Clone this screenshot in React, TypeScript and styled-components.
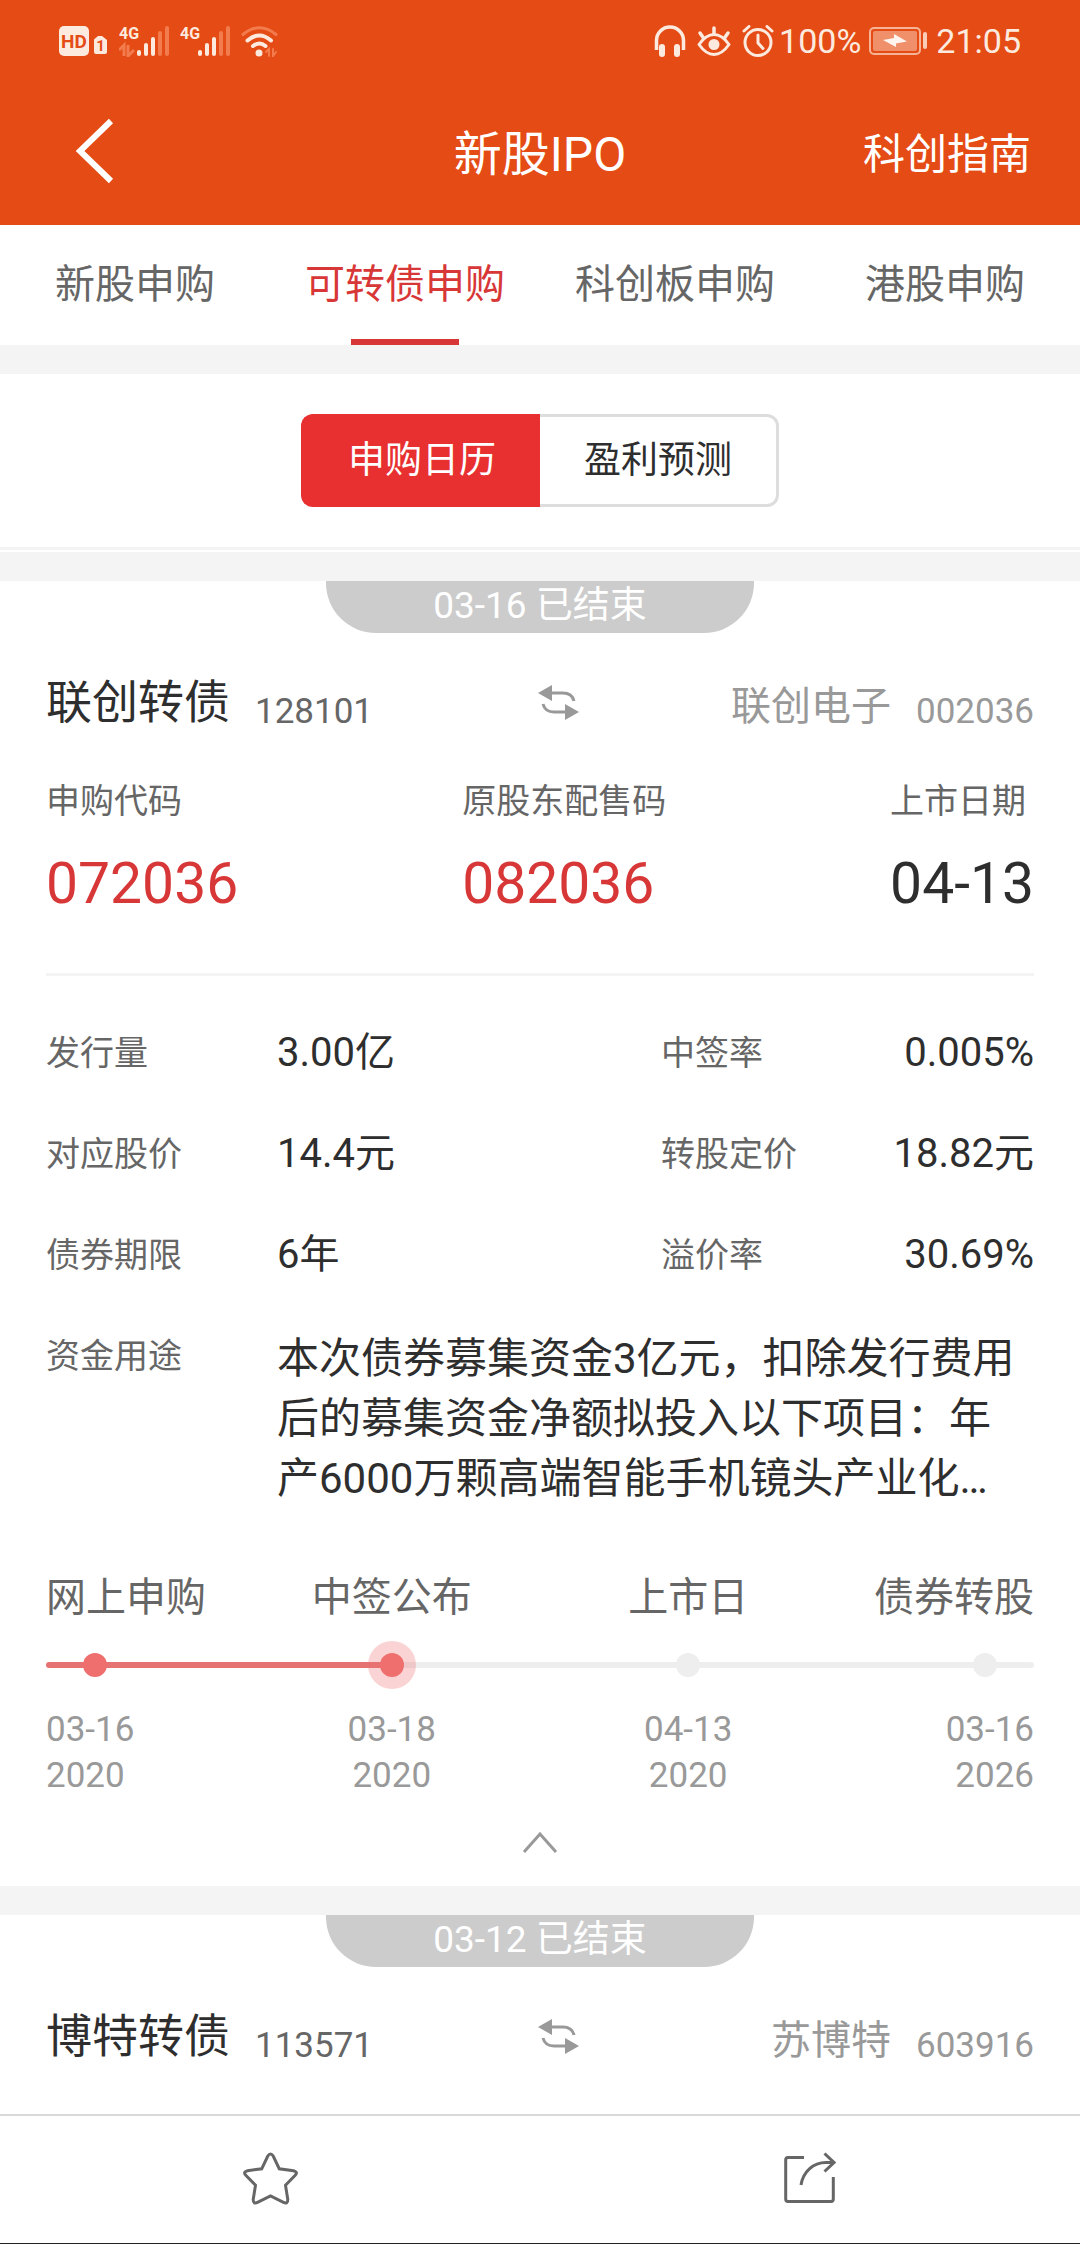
import React, { useState } from "react";
import styled, { createGlobalStyle, css } from "styled-components";

const color = {
  brand: "#e54b15",
  red: "#d83737",
  fill: "#e83030",
  text: "#2e2e2e",
  sub: "#666666",
  muted: "#999999",
  band: "#f4f4f4",
  status: "#fdeadf",
};

const GlobalStyle = createGlobalStyle`
  *, *::before, *::after { box-sizing: border-box; }
  body {
    margin: 0;
    background: #ffffff;
    color: ${color.text};
    font-family: Roboto, "Noto Sans CJK SC", sans-serif;
  }
  h1, h2, p, ol, dl, dd { margin: 0; padding: 0; font-weight: 400; }
  ol { list-style: none; }
  button { margin: 0; padding: 0; border: 0; background: none; font: inherit; color: inherit; cursor: pointer; }
  a { color: inherit; text-decoration: none; }
  svg { display: block; flex: none; }
`;

const Page = styled.div`
  min-height: 100vh;
  display: flex;
  flex-direction: column;
  background: #ffffff;
`;

const Header = styled.header`
  background: ${color.brand};
  color: #ffffff;
`;

const StatusBar = styled.div`
  height: 82px;
  padding: 0 59px;
  display: flex;
  align-items: center;
  justify-content: space-between;
  color: ${color.status};
  font-size: 34px;
  line-height: 34px;
`;

const StatusGroup = styled.div<{ $gap: number }>`
  display: flex;
  align-items: center;
  gap: ${(p) => p.$gap}px;
`;

const TitleBar = styled.div`
  height: 143px;
  padding: 2px 49px 0 70px;
  display: grid;
  grid-template-columns: 1fr auto 1fr;
  align-items: center;
`;

const BackButton = styled.button`
  justify-self: start;
  padding-bottom: 8px;
`;

const Title = styled.h1`
  font-size: 48px;
  line-height: 72px;
  padding-right: 21px;
`;

const GuideLink = styled.a`
  justify-self: end;
  font-size: 42px;
  line-height: 63px;
`;

const Tabs = styled.nav`
  display: grid;
  grid-template-columns: repeat(4, 1fr);
`;

const Tab = styled.button<{ $active: boolean }>`
  height: 120px;
  display: flex;
  flex-direction: column;
  align-items: center;
  justify-content: space-between;
  font-size: 40px;
  line-height: 60px;
  padding-top: 30px;
  color: ${(p) => (p.$active ? color.red : color.sub)};
  &::after {
    content: "";
    width: 108px;
    height: 6px;
    background: ${(p) => (p.$active ? color.red : "transparent")};
  }
`;

const Band = styled.div`
  height: 29px;
  background: ${color.band};
`;

const SwitchArea = styled.div`
  padding: 40px 0;
  margin-bottom: 2px;
  display: flex;
  justify-content: center;
  border-bottom: 3px solid ${color.band};
`;

const Segment = styled.button<{ $active: boolean }>`
  width: 239px;
  height: 93px;
  font-size: 37px;
  line-height: 54px;
  border: 3px solid #dddddd;
  color: ${color.text};
  &:first-child {
    border-radius: 12px 0 0 12px;
    border-right-width: 0;
  }
  &:last-child {
    border-radius: 0 12px 12px 0;
    border-left-width: 0;
  }
  ${(p) =>
    p.$active &&
    css`
      background: ${color.fill};
      border-color: ${color.fill};
      color: #ffffff;
    `}
`;

const Card = styled.article`
  padding: 0 46px;
  display: flex;
  flex-direction: column;
`;

const StatusPill = styled.p`
  align-self: center;
  width: 428px;
  height: 52px;
  border-radius: 0 0 50px 50px;
  background: #cccccc;
  color: #ffffff;
  font-size: 37px;
  line-height: 50px;
  text-align: center;
`;

const NameRow = styled.div`
  margin-top: 35px;
  display: grid;
  grid-template-columns: 491fr 497fr;
`;

const NameHalf = styled.div`
  display: flex;
  align-items: flex-end;
  gap: 25px;
`;

const SwapSlot = styled.span`
  align-self: center;
  margin-right: auto;
`;

const BondName = styled.h2`
  font-size: 46px;
  line-height: 69px;
`;

const StockName = styled.span`
  font-size: 40px;
  line-height: 60px;
  color: ${color.muted};
`;

const Code = styled.span<{ $muted?: boolean }>`
  font-size: 35px;
  line-height: 51px;
  color: ${(p) => (p.$muted ? color.muted : color.sub)};
`;

const CodeList = styled.dl`
  margin-top: 39px;
  padding-bottom: 46px;
  display: flex;
  justify-content: space-between;
  border-bottom: 3px solid ${color.band};
`;

const CodeLabel = styled.dt`
  font-size: 34px;
  line-height: 51px;
  color: ${color.sub};
`;

const CodeValue = styled.dd<{ $red?: boolean }>`
  margin-top: 13px;
  font-size: 57px;
  line-height: 87px;
  color: ${(p) => (p.$red ? color.red : color.text)};
`;

const InfoGrid = styled.dl`
  margin-top: 47px;
  display: grid;
  grid-template-columns: 231fr 384fr 160fr 213fr;
  row-gap: 41px;
`;

const InfoLabel = styled.dt`
  font-size: 34px;
  line-height: 60px;
  color: ${color.sub};
`;

const InfoValue = styled.dd<{ $end?: boolean }>`
  font-size: 40px;
  line-height: 60px;
  white-space: nowrap;
  text-align: ${(p) => (p.$end ? "right" : "left")};
`;

const InfoText = styled.dd`
  grid-column: 2 / -1;
  padding: 3px 8px 0 0;
  font-size: 42px;
  line-height: 60px;
`;

const Steps = styled.ol`
  margin-top: 59px;
  display: grid;
  grid-template-columns: 2fr 3fr 3fr 2fr;
`;

type StepPlace = "first" | "middle" | "last";
type StepState = "done" | "current" | "todo";

const textSide = { first: "left", middle: "center", last: "right" };
const dotSide = { first: "25%", middle: "50%", last: "75%" };

const Step = styled.li<{ $place: StepPlace }>`
  display: flex;
  flex-direction: column;
  text-align: ${(p) => textSide[p.$place]};
`;

const StepName = styled.span`
  font-size: 40px;
  line-height: 60px;
  color: ${color.sub};
  white-space: nowrap;
`;

const lineFill = {
  done: "#e67272",
  current: "linear-gradient(to right, #e67272 50%, #eeeeee 50%)",
  todo: "#eeeeee",
};

const StepTrack = styled.span<{ $state: StepState; $place: StepPlace }>`
  position: relative;
  height: 6px;
  margin: 34px 0 39px;
  background: ${(p) => lineFill[p.$state]};
  border-radius: ${(p) =>
    p.$place === "first" ? "3px 0 0 3px" : p.$place === "last" ? "0 3px 3px 0" : "0"};
  &::after {
    content: "";
    position: absolute;
    top: 50%;
    left: ${(p) => dotSide[p.$place]};
    width: 24px;
    height: 24px;
    border-radius: 50%;
    transform: translate(-50%, -50%);
    background: ${(p) => (p.$state === "todo" ? "#eeeeee" : "#ef6f6f")};
    box-shadow: ${(p) => (p.$state === "current" ? "0 0 0 12px rgba(239, 111, 111, 0.3)" : "none")};
  }
`;

const StepDate = styled.time`
  font-size: 35px;
  line-height: 46px;
  color: ${color.muted};
`;

const FoldButton = styled.button`
  align-self: center;
  margin-top: 32px;
  padding-bottom: 31px;
`;

const BottomBar = styled.footer`
  position: sticky;
  bottom: 0;
  margin-top: auto;
  display: grid;
  grid-template-columns: 1fr 1fr;
  background: #ffffff;
  border-top: 2px solid #d9d9d9;
  border-bottom: 1px solid #222222;
`;

const BarButton = styled.button`
  height: 127px;
  display: flex;
  align-items: center;
  justify-content: center;
  padding-bottom: 3px;
`;

function HdIcon() {
  return (
    <svg width="49" height="32" viewBox="0 0 49 32" aria-hidden="true">
      <rect x="0" y="1" width="30" height="30" rx="5" fill="currentColor" />
      <text x="15" y="23" textAnchor="middle" fontFamily="Roboto, sans-serif" fontWeight="700" fontSize="19" fill={color.brand}>
        HD
      </text>
      <path d="M35 17 V27 a2 2 0 0 0 2 2 H46 a2 2 0 0 0 2 -2 V15 L43 11 H40 V17 Z" fill="currentColor" />
      <path d="M39 11 L35 14.500 V18 H41 V11 Z" fill="currentColor" />
      <text x="41.500" y="26" textAnchor="middle" fontFamily="Roboto, sans-serif" fontWeight="700" fontSize="15" fill={color.brand}>
        1
      </text>
    </svg>
  );
}

const bars = [
  { x: 18, h: 6 },
  { x: 25, h: 13 },
  { x: 32, h: 19 },
  { x: 39, h: 25 },
  { x: 46, h: 30 },
];

function SignalIcon({ data }: { data?: boolean }) {
  return (
    <svg width="50" height="32" viewBox="0 0 50 32" aria-hidden="true">
      <text x="0" y="14" fontFamily="Roboto, sans-serif" fontWeight="700" fontSize="16" fill="currentColor">
        4G
      </text>
      {bars.map((b, i) => (
        <rect key={b.x} x={b.x} y={31 - b.h} width="4" height={b.h} rx="2" fill={i > 2 ? "#f27c4d" : "currentColor"} />
      ))}
      {data && <path d="M0 25 L5 20 V31 M9 20 V31 L15 25" fill="none" stroke="#f27c4d" strokeWidth="3" />}
    </svg>
  );
}

function WifiIcon() {
  return (
    <svg width="37" height="32" viewBox="0 0 37 32" fill="none" strokeLinecap="round" aria-hidden="true">
      <path d="M2 9.500 Q18.500 -4 35 9.500" stroke="#f27c4d" strokeWidth="3" />
      <path d="M6.500 15.500 Q18.500 5.500 30 15.500" stroke="currentColor" strokeWidth="4" />
      <path d="M12 21 Q18.500 16 24.500 21" stroke="currentColor" strokeWidth="4" />
      <circle cx="18" cy="28" r="3.500" fill="currentColor" />
      <path d="M25 27 L28 24 V31 M32 24 V31 L35 27" stroke="#f27c4d" strokeWidth="2" />
    </svg>
  );
}

function HeadphonesIcon() {
  return (
    <svg width="32" height="32" viewBox="0 0 32 32" aria-hidden="true">
      <path d="M2.500 25 V15.500 A13.500 13.500 0 0 1 29.500 15.500 V25" fill="none" stroke="currentColor" strokeWidth="3.500" />
      <rect x="5" y="19" width="6" height="13" rx="3" fill="currentColor" />
      <rect x="20" y="19" width="6" height="13" rx="3" fill="currentColor" />
    </svg>
  );
}

function EyeIcon() {
  return (
    <svg width="34" height="32" viewBox="0 0 34 32" fill="none" stroke="currentColor" strokeWidth="3.500" strokeLinecap="round" aria-hidden="true">
      <path d="M2 19.500 Q9 9.500 17 9.500 Q25 9.500 32 19.500 Q25 29.500 17 29.500 Q9 29.500 2 19.500 Z" strokeLinejoin="round" strokeWidth="3" />
      <circle cx="17" cy="19.500" r="5.500" fill="currentColor" stroke="none" />
      <path d="M17 3 V9 M3 8 L6.500 13 M31 8 L27.500 13" />
    </svg>
  );
}

function AlarmIcon() {
  return (
    <svg width="32" height="32" viewBox="0 0 32 32" fill="none" stroke="currentColor" strokeWidth="3" strokeLinecap="round" aria-hidden="true">
      <circle cx="16" cy="17.500" r="13" />
      <path d="M16 10 V18 L21 23.500" strokeLinejoin="round" />
      <path d="M2 6 L7 1.500 M30 6 L25 1.500" />
    </svg>
  );
}

function BatteryIcon() {
  return (
    <svg width="59" height="30" viewBox="0 0 59 30" aria-hidden="true">
      <rect x="1" y="2" width="50" height="26" rx="4" fill="none" stroke="#f6b396" strokeWidth="2" />
      <rect x="4" y="5" width="44" height="20" rx="2" fill="#f0906a" />
      <path d="M14 14 L25 12 V8 L38 15.500 L27 17.500 V21 Z" fill="#fff4ee" />
      <rect x="54" y="6" width="4" height="17" rx="2" fill="#f9cdb8" />
    </svg>
  );
}

function BackIcon() {
  return (
    <svg width="48" height="66" viewBox="0 0 48 66" aria-hidden="true">
      <path d="M41 3 L10 33 L41 63" fill="none" stroke="#ffffff" strokeWidth="6" />
    </svg>
  );
}

function SwapIcon() {
  return (
    <svg width="43" height="38" viewBox="0 0 43 38" aria-hidden="true">
      <path d="M1 9 L15 1 V17 Z M42 28 L28 20 V36 Z" fill={color.muted} />
      <path d="M14 9 H26 Q35 9 37 17 M6 20 Q8 28 17 28 H29" fill="none" stroke={color.muted} strokeWidth="3" />
    </svg>
  );
}

function FoldIcon() {
  return (
    <svg width="36" height="24" viewBox="0 0 36 24" aria-hidden="true">
      <path d="M2 21 L18 3 L34 21" fill="none" stroke={color.muted} strokeWidth="3" />
    </svg>
  );
}

function StarIcon() {
  return (
    <svg width="55" height="53" viewBox="0 0 55 53" aria-hidden="true">
      <path
        d="M24.800 4 Q27.500 0 30.200 4 L36.300 16.800 L50.500 18.700 Q55.500 20 52 23.500 L42.500 33.200 L44.800 47.500 Q44.800 52.500 40.500 50.400 L27.500 44 L14.500 50.400 Q10.200 52.500 10.200 47.500 L12.500 33.200 L3 23.500 Q-0.500 20 4.500 18.700 L18.700 16.800 Z"
        fill="none"
        stroke={color.sub}
        strokeWidth="3"
      />
    </svg>
  );
}

function ShareIcon() {
  return (
    <svg width="52" height="52" viewBox="0 0 52 52" fill="none" stroke={color.sub} strokeWidth="3" aria-hidden="true">
      <path d="M20 5.500 H4 Q1.700 5.500 1.700 8 V47 Q1.700 49.500 4 49.500 H47 Q49.300 49.500 49.300 47 V25" />
      <path d="M17 33 C19 20 29 10.500 42 10.500 H49" />
      <path d="M40.500 1.500 L50 10.500 L40.500 19.500" />
    </svg>
  );
}

type Bond = { name: string; code: string; stock: string; stockCode: string; day: string };

function CardHead({ bond }: { bond: Bond }) {
  return (
    <>
      <StatusPill>{bond.day} 已结束</StatusPill>
      <NameRow>
        <NameHalf>
          <BondName>{bond.name}</BondName>
          <Code>{bond.code}</Code>
        </NameHalf>
        <NameHalf>
          <SwapSlot>
            <SwapIcon />
          </SwapSlot>
          <StockName>{bond.stock}</StockName>
          <Code $muted>{bond.stockCode}</Code>
        </NameHalf>
      </NameRow>
    </>
  );
}

const tabs = ["新股申购", "可转债申购", "科创板申购", "港股申购"];
const segments = ["申购日历", "盈利预测"];

const bonds: Bond[] = [
  { name: "联创转债", code: "128101", stock: "联创电子", stockCode: "002036", day: "03-16" },
  { name: "博特转债", code: "113571", stock: "苏博特", stockCode: "603916", day: "03-12" },
];

const codes = [
  { label: "申购代码", value: "072036", red: true },
  { label: "原股东配售码", value: "082036", red: true },
  { label: "上市日期", value: "04-13", red: false },
];

const info = [
  ["发行量", "3.00亿"],
  ["中签率", "0.005%"],
  ["对应股价", "14.4元"],
  ["转股定价", "18.82元"],
  ["债券期限", "6年"],
  ["溢价率", "30.69%"],
];

const steps: { name: string; day: string; year: string; place: StepPlace; state: StepState }[] = [
  { name: "网上申购", day: "03-16", year: "2020", place: "first", state: "done" },
  { name: "中签公布", day: "03-18", year: "2020", place: "middle", state: "current" },
  { name: "上市日", day: "04-13", year: "2020", place: "middle", state: "todo" },
  { name: "债券转股", day: "03-16", year: "2026", place: "last", state: "todo" },
];

export default function App() {
  const [tab, setTab] = useState(1);
  const [segment, setSegment] = useState(0);

  return (
    <Page lang="zh-CN">
      <GlobalStyle />
      <Header>
        <StatusBar>
          <StatusGroup $gap={11}>
            <HdIcon />
            <SignalIcon data />
            <SignalIcon />
            <WifiIcon />
          </StatusGroup>
          <StatusGroup $gap={5}>
            <StatusGroup $gap={11}>
              <HeadphonesIcon />
              <EyeIcon />
              <AlarmIcon />
            </StatusGroup>
            <StatusGroup $gap={8}>
              <span>100%</span>
              <BatteryIcon />
              <span>21:05</span>
            </StatusGroup>
          </StatusGroup>
        </StatusBar>
        <TitleBar>
          <BackButton type="button" aria-label="返回">
            <BackIcon />
          </BackButton>
          <Title>新股IPO</Title>
          <GuideLink href="#guide">科创指南</GuideLink>
        </TitleBar>
      </Header>

      <Tabs>
        {tabs.map((name, i) => (
          <Tab key={name} type="button" $active={i === tab} onClick={() => setTab(i)}>
            {name}
          </Tab>
        ))}
      </Tabs>
      <Band />
      <SwitchArea>
        {segments.map((name, i) => (
          <Segment key={name} type="button" aria-pressed={i === segment} $active={i === segment} onClick={() => setSegment(i)}>
            {name}
          </Segment>
        ))}
      </SwitchArea>
      <Band />

      <Card>
        <CardHead bond={bonds[0]} />
        <CodeList>
          {codes.map((c) => (
            <div key={c.label}>
              <CodeLabel>{c.label}</CodeLabel>
              <CodeValue $red={c.red}>{c.value}</CodeValue>
            </div>
          ))}
        </CodeList>
        <InfoGrid>
          {info.map(([label, value], i) => (
            <React.Fragment key={label}>
              <InfoLabel>{label}</InfoLabel>
              <InfoValue $end={i % 2 === 1}>{value}</InfoValue>
            </React.Fragment>
          ))}
          <InfoLabel>资金用途</InfoLabel>
          <InfoText>
            本次债券募集资金3亿元，扣除发行费用后的募集资金净额拟投入以下项目：年产6000万颗高端智能手机镜头产业化…
          </InfoText>
        </InfoGrid>
        <Steps>
          {steps.map((s) => (
            <Step key={s.name} $place={s.place}>
              <StepName>{s.name}</StepName>
              <StepTrack $state={s.state} $place={s.place} />
              <StepDate>{s.day}</StepDate>
              <StepDate>{s.year}</StepDate>
            </Step>
          ))}
        </Steps>
        <FoldButton type="button" aria-label="收起">
          <FoldIcon />
        </FoldButton>
      </Card>
      <Band />
      <Card>
        <CardHead bond={bonds[1]} />
      </Card>

      <BottomBar>
        <BarButton type="button" aria-label="收藏">
          <StarIcon />
        </BarButton>
        <BarButton type="button" aria-label="分享">
          <ShareIcon />
        </BarButton>
      </BottomBar>
    </Page>
  );
}
